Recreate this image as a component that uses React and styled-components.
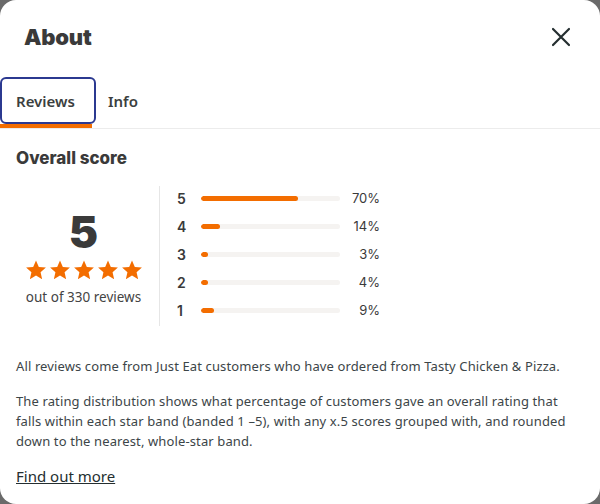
import React from 'react'
import styled, { createGlobalStyle } from 'styled-components'

const Global = createGlobalStyle`
  html, body {
    margin: 0;
    padding: 0;
    background: #6a6a6a;
  }
  * { box-sizing: border-box; }
`;

const bands = [
  { star: 5, pct: 70 },
  { star: 4, pct: 14 },
  { star: 3, pct: 3 },
  { star: 2, pct: 4 },
  { star: 1, pct: 9 },
];

function Star() {
  return (
    <svg width="22" height="22" viewBox="0 0 24 24">
      <path
        d="M12 1.5l3.1 7.1 7.7.7-5.8 5.1 1.7 7.6L12 18l-6.7 4 1.7-7.6-5.8-5.1 7.7-.7z"
        fill="#f36d00"
      />
    </svg>
  )
}

function App() {
  return (
    <>
      <Global />
      <Modal>
        <Header>
          <Title>About</Title>
          <Close aria-label="Close">
            <svg width="20" height="20" viewBox="0 0 20 20">
              <path d="M2 2L18 18M18 2L2 18" stroke="#242e30" strokeWidth="2.2" strokeLinecap="round" />
            </svg>
          </Close>
        </Header>
        <Tabs>
          <Tab active>Reviews</Tab>
          <Tab>Info</Tab>
        </Tabs>
        <Body>
          <SectionTitle>Overall score</SectionTitle>
          <Score>
            <Summary>
              <BigNumber>5</BigNumber>
              <Stars>
                <Star /><Star /><Star /><Star /><Star />
              </Stars>
              <Count>out of 330 reviews</Count>
            </Summary>
            <Bands>
              {bands.map((b) => (
                <Band key={b.star}>
                  <BandLabel>{b.star}</BandLabel>
                  <Track>
                    <Fill style={{ width: `${Math.max(b.pct, 5)}%` }} />
                  </Track>
                  <Pct>{b.pct}%</Pct>
                </Band>
              ))}
            </Bands>
          </Score>
          <Para>All reviews come from Just Eat customers who have ordered from Tasty Chicken &amp; Pizza.</Para>
          <Para>
            The rating distribution shows what percentage of customers gave an overall rating that
            falls within each star band (banded 1 –5), with any x.5 scores grouped with, and rounded
            down to the nearest, whole-star band.
          </Para>
          <More href="#">Find out more</More>
        </Body>
      </Modal>
    </>
  )
}

const Modal = styled.div`
  width: 600px;
  height: 504px;
  background: #fff;
  border-radius: 16px;
  overflow: hidden;
  font-family: "Noto Sans", "Open Sans", sans-serif;
  color: #242e30;
`;

const Header = styled.div`
  display: flex;
  align-items: center;
  justify-content: space-between;
  height: 74px;
  padding: 0 29px 0 24px;
`;

const Title = styled.h1`
  margin: 0;
  font-family: "Inter", sans-serif;
  font-weight: 900;
  font-size: 22px;
  letter-spacing: -0.2px;
  color: #3a3a3a;
`;

const Close = styled.button`
  border: none;
  background: none;
  padding: 0;
  display: flex;
  cursor: pointer;
`;

const Tabs = styled.div`
  display: flex;
  align-items: stretch;
  height: 55px;
  padding-top: 3px;
  border-bottom: 1px solid #ececec;
`;

const Tab = styled.div`
  position: relative;
  display: flex;
  align-items: center;
  height: 47px;
  padding: 0 12px;
  font-size: 15px;
  font-weight: 600;
  color: #3b3f40;
  ${(p) =>
    p.active &&
    `
    width: 96px;
    padding: 0 0 0 14px;
    border: 2px solid #2b3990;
    border-radius: 6px;
    &:after {
      content: '';
      position: absolute;
      left: -2px;
      bottom: -6px;
      width: 92px;
      height: 4px;
      background: #f36d00;
    }
  `}
`;

const Body = styled.div`
  padding: 0 30px 0 16px;
`;

const SectionTitle = styled.h2`
  margin: 18px 0 0;
  font-family: "Inter", sans-serif;
  font-weight: 800;
  font-size: 17px;
  line-height: 22px;
  color: #3a3a3a;
`;

const Score = styled.div`
  display: flex;
  margin-top: 17px;
`;

const Summary = styled.div`
  width: 144px;
  display: flex;
  flex-direction: column;
  align-items: center;
  border-right: 1px solid #e6e6e6;
  padding: 21px 8px 0 0;
  height: 140px;
`;

const BigNumber = styled.div`
  font-family: "Inter", sans-serif;
  font-weight: 900;
  font-size: 44px;
  line-height: 50px;
  color: #3a3a3a;
`;

const Stars = styled.div`
  display: flex;
  gap: 2px;
  margin-top: 2px;
`;

const Count = styled.div`
  margin-top: 7px;
  font-size: 13.5px;
  color: #444;
`;

const Bands = styled.div`
  display: flex;
  flex-direction: column;
  margin-top: -2px;
  padding-left: 17px;
`;

const Band = styled.div`
  display: flex;
  align-items: center;
  height: 28px;
`;

const BandLabel = styled.span`
  width: 24px;
  font-family: "Inter", sans-serif;
  font-weight: 600;
  font-size: 14px;
  color: #3a3a3a;
`;

const Track = styled.div`
  width: 139px;
  height: 5px;
  border-radius: 3px;
  background: #f5f3f1;
  overflow: hidden;
`;

const Fill = styled.div`
  height: 100%;
  border-radius: 3px;
  background: #f36d00;
`;

const Pct = styled.span`
  width: 40px;
  text-align: right;
  font-family: "Inter", sans-serif;
  font-size: 13px;
  color: #3a3a3a;
`;

const Para = styled.p`
  margin: 30px 0 0;
  font-size: 13px;
  letter-spacing: 0.12px;
  line-height: 20px;
  color: #3c4548;
  & + & {
    margin-top: 15px;
  }
`;

const More = styled.a`
  display: inline-block;
  margin-top: 15px;
  font-size: 15px;
  color: #242e30;
  text-decoration: underline;
`;

export default App
